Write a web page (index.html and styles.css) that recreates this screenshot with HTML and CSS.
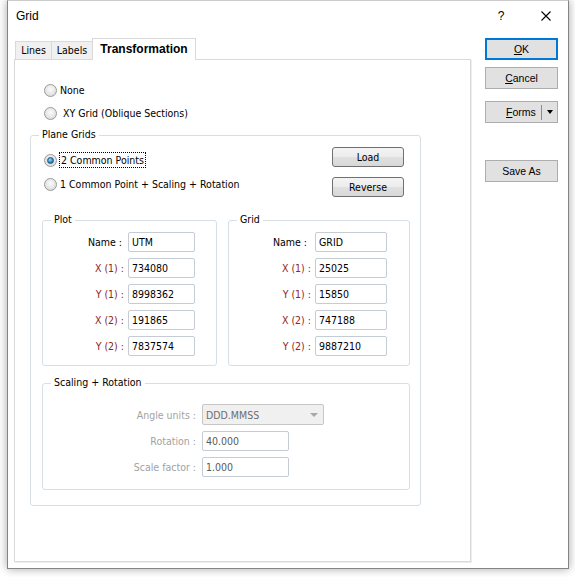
FILE: index.html
```html
<!DOCTYPE html>
<html>
<head>
<meta charset="utf-8">
<title>Grid</title>
<link rel="stylesheet" href="styles.css">
</head>
<body>
<div class="window">
  <div class="titlebar">
    <span class="title">Grid</span>
    <span class="help">?</span>
    <svg class="close" width="10" height="10" viewBox="0 0 10 10"><path d="M0.5 0.5 L9.5 9.5 M9.5 0.5 L0.5 9.5" stroke="#000" stroke-width="1.1" fill="none"/></svg>
  </div>
  <div class="main">
    <div class="tabarea">
      <div class="tabs">
        <div class="tab tab-lines">Lines</div>
        <div class="tab tab-labels">Labels</div>
        <div class="tab tab-active">Transformation</div>
      </div>
      <div class="panel">
        <div class="radio-row"><span class="radio"></span><span>None</span></div>
        <div class="radio-row row-xy"><span class="radio"></span><span class="xy-text">XY Grid (Oblique Sections)</span></div>

        <div class="group plane">
          <div class="group-title">Plane Grids</div>
          <div class="plane-top">
            <div class="plane-radios">
              <div class="radio-row inner"><span class="radio checked"></span><span class="focus">2 Common Points</span></div>
              <div class="radio-row inner"><span class="radio"></span><span>1 Common Point + Scaling + Rotation</span></div>
            </div>
            <div class="plane-buttons">
              <div class="btn">Load</div>
              <div class="btn">Reverse</div>
            </div>
          </div>

          <div class="coord-groups">
            <div class="group plot">
              <div class="group-title">Plot</div>
              <div class="form form-plot">
                <div class="lbl name">Name :</div><div class="field">UTM</div>
                <div class="lbl req">X (1) :</div><div class="field">734080</div>
                <div class="lbl req">Y (1) :</div><div class="field">8998362</div>
                <div class="lbl req">X (2) :</div><div class="field">191865</div>
                <div class="lbl req">Y (2) :</div><div class="field">7837574</div>
              </div>
            </div>
            <div class="group gridg">
              <div class="group-title">Grid</div>
              <div class="form form-grid">
                <div class="lbl name">Name :</div><div class="field">GRID</div>
                <div class="lbl req">X (1) :</div><div class="field">25025</div>
                <div class="lbl req">Y (1) :</div><div class="field">15850</div>
                <div class="lbl req">X (2) :</div><div class="field">747188</div>
                <div class="lbl req">Y (2) :</div><div class="field">9887210</div>
              </div>
            </div>
          </div>

          <div class="group scaling">
            <div class="group-title">Scaling + Rotation</div>
            <div class="form form-scale">
              <div class="lbl dis">Angle units :</div>
              <div class="combo"><span>DDD.MMSS</span><span class="combo-arrow"></span></div>
              <div class="lbl dis">Rotation :</div>
              <div class="field dis-field w87">40.000</div>
              <div class="lbl dis">Scale factor :</div>
              <div class="field dis-field w87">1.000</div>
            </div>
          </div>
        </div>
      </div>
    </div>

    <div class="side">
      <div class="sbtn ok"><span><u>O</u>K</span></div>
      <div class="sbtn cancel"><span><u>C</u>ancel</span></div>
      <div class="sbtn forms">
        <span class="forms-text"><u>F</u>orms</span>
        <span class="forms-sep"></span>
        <span class="forms-arrow"></span>
      </div>
      <div class="sbtn saveas"><span>Save As</span></div>
    </div>
  </div>
</div>
</body>
</html>
```
FILE: styles.css
```css
* { box-sizing: border-box; }
html, body { margin: 0; padding: 0; background: #ffffff; }
body {
  width: 575px;
  height: 577px;
  overflow: hidden;
  font-family: "DejaVu Sans Condensed", "DejaVu Sans", "Liberation Sans", sans-serif;
  font-size: 10.5px;
  color: #000;
}

.window {
  margin-left: 7px;
  width: 562px;
  height: 569px;
  border: 1px solid #858585;
  border-top-color: #cccccc;
  background: #fff;
  box-shadow: 0 0 9px rgba(0, 0, 0, 0.35);
}

.titlebar {
  height: 29px;
  display: flex;
  align-items: center;
  font-family: "Liberation Sans", sans-serif;
  font-size: 12px;
}
.title { margin-left: 8px; flex: 1; }
.help { width: 8px; text-align: center; margin-right: 36px; font-size: 12px; }
.close { display: block; margin-right: 17px; }

.main {
  display: flex;
  padding: 8px 0 0 6px;
}

.tabarea { width: 457px; }

.tabs {
  display: flex;
  align-items: flex-end;
  height: 21px;
  padding-left: 1px;
}
.tab {
  height: 18px;
  border: 1px solid #d9d9d9;
  border-bottom: 0;
  border-right: 0;
  background: #f0f0f0;
  text-align: center;
  line-height: 16px;
  font-size: 10.5px;
}
.tab-lines { width: 36px; }
.tab-labels { width: 41px; }
.tab-active {
  width: 104px;
  height: 22px;
  margin-bottom: -1px;
  background: #fff;
  border-right: 1px solid #d9d9d9;
  font-family: "Liberation Sans", sans-serif;
  font-weight: bold;
  font-size: 12px;
  line-height: 20px;
  position: relative;
  z-index: 1;
}

.panel {
  width: 457px;
  height: 503px;
  border: 1px solid #d9d9d9;
  box-shadow: 1px 1px 0 #ededed;
  padding-top: 20px;
}

.radio-row {
  display: flex;
  align-items: center;
  height: 20px;
  margin-left: 29px;
}
.row-xy { margin-top: 3px; }
.xy-text { margin-left: 3px; }
.radio-row.inner { margin-left: 0; }

.radio {
  width: 13px;
  height: 13px;
  border-radius: 50%;
  border: 1px solid #9a9a9a;
  background: radial-gradient(circle at 50% 40%, #fbfbfb 0%, #e6e6e6 55%, #d2d2d2 100%);
  margin-right: 3px;
  flex: none;
  position: relative;
}
.radio.checked::after {
  content: "";
  position: absolute;
  left: 2px;
  top: 2px;
  width: 7px;
  height: 7px;
  border-radius: 50%;
  border: 1px solid #1d4f74;
  background: radial-gradient(circle at 40% 35%, #9ed8f7 0%, #3c93c8 50%, #175b8b 100%);
  box-sizing: border-box;
}

.focus {
  border: 1px dotted #000;
  padding: 0 1px;
  line-height: 14px;
  margin-left: -1px;
}

.group {
  border: 1px solid #d5dfe5;
  border-radius: 3px;
}
.group-title {
  width: fit-content;
  height: 14px;
  line-height: 14px;
  margin: -9px 0 0 8px;
  padding: 0 3px;
  background: #fff;
}

.plane {
  margin: 12px 0 0 15px;
  width: 391px;
  height: 371px;
}
.plane-top {
  display: flex;
  justify-content: space-between;
  padding: 6px 16px 0 13px;
}
.plane-radios {
  display: flex;
  flex-direction: column;
  gap: 4px;
  padding-top: 3px;
}
.plane-buttons {
  display: flex;
  flex-direction: column;
  gap: 10px;
}
.btn {
  width: 72px;
  height: 20px;
  border: 1px solid #707070;
  border-radius: 3px;
  background: linear-gradient(#f4f4f4 0%, #ececec 50%, #e0e0e0 51%, #d8d8d8 100%);
  text-align: center;
  line-height: 18px;
}

.coord-groups {
  display: flex;
  gap: 11px;
  margin: 23px 0 0 11px;
}
.plot { width: 175px; height: 146px; }
.gridg { width: 182px; height: 146px; }

.form {
  display: grid;
  column-gap: 4px;
  row-gap: 6px;
  padding-top: 6px;
  align-items: center;
}
.form-plot { grid-template-columns: 81px 67px; }
.form-grid { grid-template-columns: 82px 72px; }
.form-grid .name { padding-right: 4px; }
.form-plot .name { padding-right: 2px; }

.lbl { text-align: right; white-space: nowrap; }
.req { color: #8e2424; }
.dis { color: #a2a2a2; }

.field {
  height: 20px;
  border: 1px solid #c5ccd3;
  border-radius: 2px;
  padding-left: 3px;
  line-height: 18px;
  background: #fff;
}
.dis-field { color: #5a5a5a; }
.w87 { width: 87px; }

.scaling {
  margin: 17px 0 0 11px;
  width: 368px;
  height: 107px;
}
.form-scale {
  grid-template-columns: 153px auto;
  column-gap: 6px;
  padding-top: 15px;
  justify-items: start;
}
.form-scale .lbl { justify-self: stretch; }

.combo {
  width: 122px;
  height: 21px;
  border: 1px solid #c6c6c6;
  border-radius: 2px;
  background: #f0f0f0;
  color: #6d6d6d;
  display: flex;
  align-items: center;
  justify-content: space-between;
  padding: 0 5px 0 3px;
}
.combo-arrow {
  width: 0;
  height: 0;
  border-left: 4px solid transparent;
  border-right: 4px solid transparent;
  border-top: 4px solid #a8a8a8;
}

.side {
  margin-left: 14px;
  width: 73px;
  display: flex;
  flex-direction: column;
  font-family: "Liberation Sans", sans-serif;
  font-size: 10.5px;
}
.sbtn {
  height: 22px;
  border: 1px solid #adadad;
  background: #e1e1e1;
  display: flex;
  align-items: center;
  justify-content: center;
}
.ok { border: 2px solid #0078d7; }
.cancel { margin-top: 7px; }
.forms { margin-top: 12px; justify-content: flex-start; }
.saveas { margin-top: 37px; }

.forms-text { flex: 1; padding-left: 20px; }
.forms-sep {
  width: 1px;
  height: 15px;
  background: #8c8c8c;
}
.forms-arrow {
  width: 15px;
  display: flex;
  justify-content: center;
}
.forms-arrow::before {
  content: "";
  width: 0;
  height: 0;
  border-left: 3.5px solid transparent;
  border-right: 3.5px solid transparent;
  border-top: 4px solid #000;
}
```
